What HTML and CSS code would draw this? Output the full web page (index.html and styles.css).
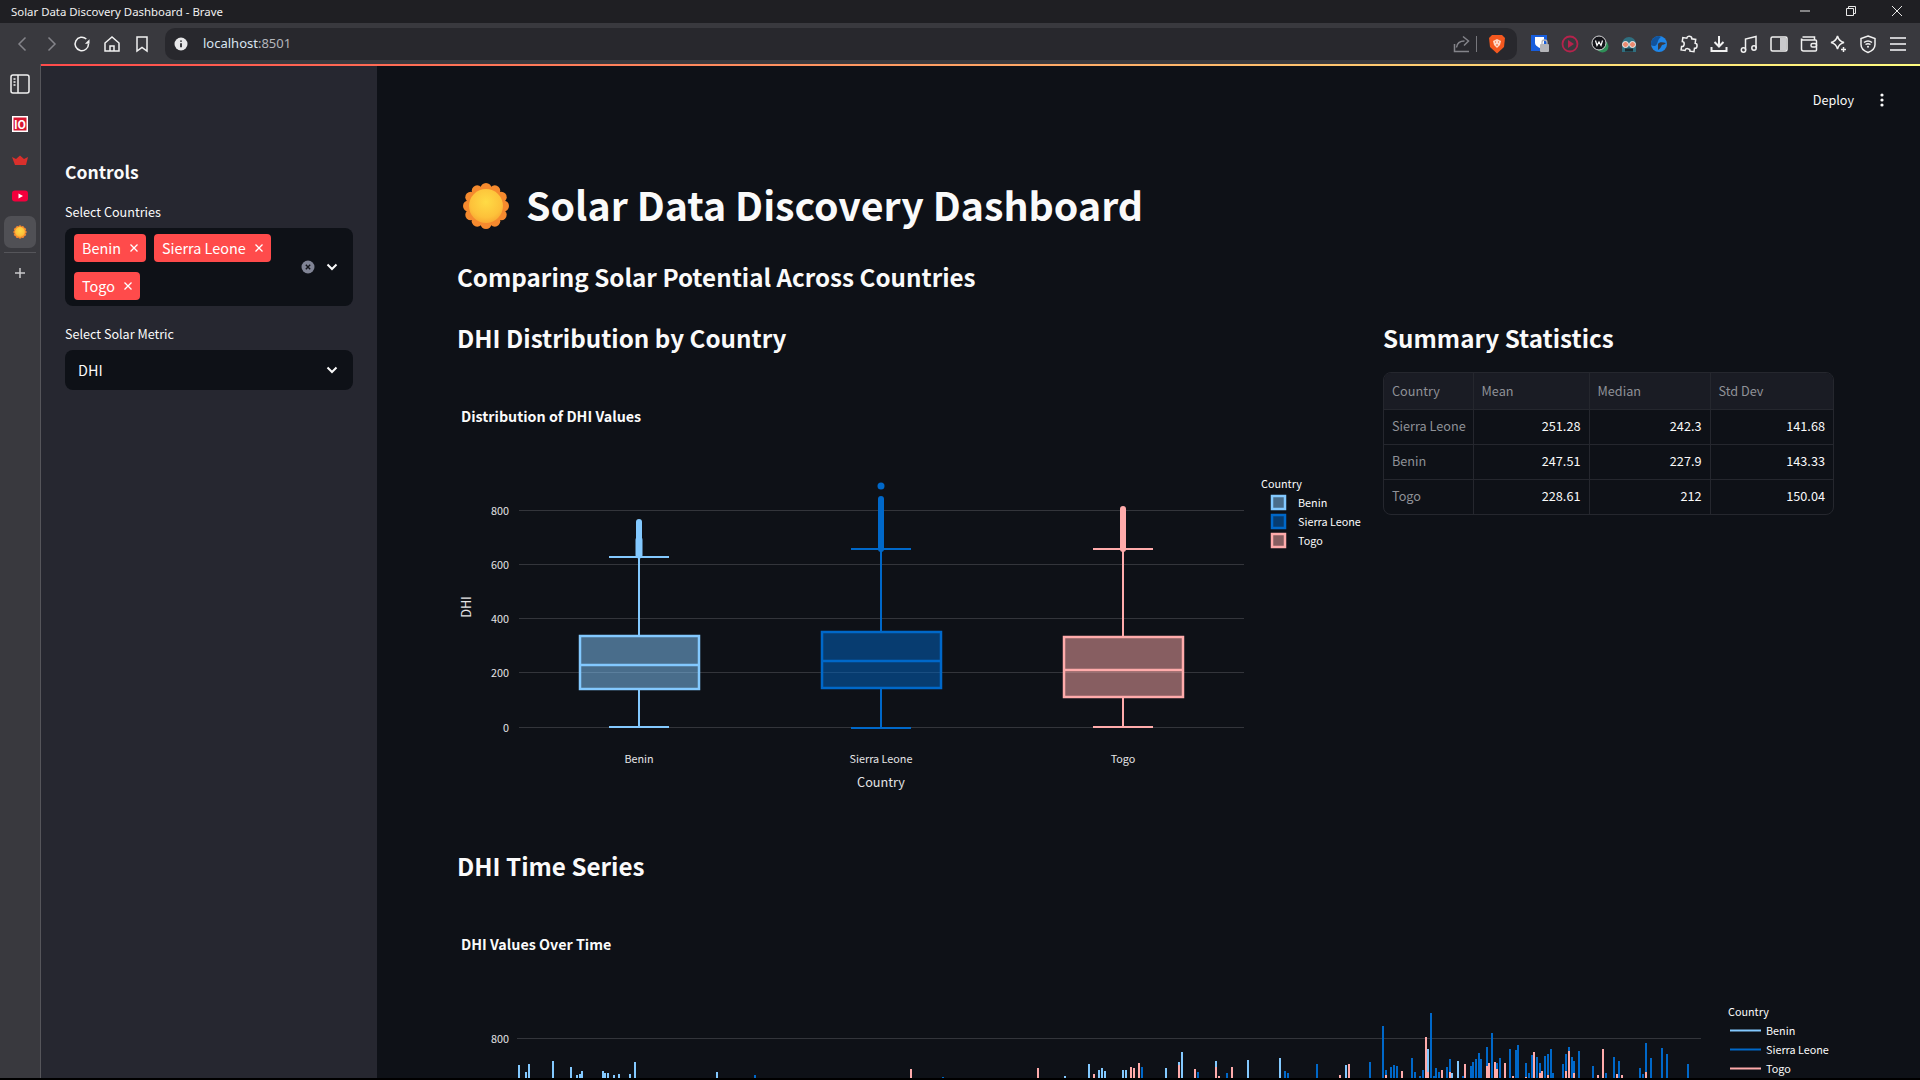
FILE: index.html
```html
<!DOCTYPE html>
<html lang="en">
<head>
    <meta charset="UTF-8">
    <title>Solar Data Discovery Dashboard - Brave</title>
    <link rel="stylesheet" href="styles.css">
</head>
<body>
    <svg class="defs" width="0" height="0">
        <defs>
            <radialGradient id="sunCore" cx="50%" cy="38%" r="65%">
                <stop offset="0%" stop-color="#ffdb45"/>
                <stop offset="70%" stop-color="#fdc13a"/>
                <stop offset="100%" stop-color="#f8a531"/>
            </radialGradient>
            <symbol id="sun" viewBox="0 0 48 48">
                <g fill="#f58a2e">
                    <circle cx="24" cy="6.5" r="5.5"/><circle cx="32.8" cy="8.8" r="5.5"/>
                    <circle cx="39.2" cy="15.2" r="5.5"/><circle cx="41.5" cy="24" r="5.5"/>
                    <circle cx="39.2" cy="32.8" r="5.5"/><circle cx="32.8" cy="39.2" r="5.5"/>
                    <circle cx="24" cy="41.5" r="5.5"/><circle cx="15.2" cy="39.2" r="5.5"/>
                    <circle cx="8.8" cy="32.8" r="5.5"/><circle cx="6.5" cy="24" r="5.5"/>
                    <circle cx="8.8" cy="15.2" r="5.5"/><circle cx="15.2" cy="8.8" r="5.5"/>
                </g>
                <circle cx="24" cy="24" r="17" fill="url(#sunCore)"/>
            </symbol>
        </defs>
    </svg>

    <div class="window">
        <div class="titlebar">
            <span class="window-title">Solar Data Discovery Dashboard - Brave</span>
            <div class="window-controls">
                <svg width="12" height="12" viewBox="0 0 12 12"><path d="M1 6h10" class="win-icon"/></svg>
                <svg width="12" height="12" viewBox="0 0 12 12"><path d="M1.5 3.5h7v7h-7zM3.5 3.5v-2h7v7h-2" class="win-icon"/></svg>
                <svg width="12" height="12" viewBox="0 0 12 12"><path d="M1 1l10 10M11 1L1 11" class="win-icon"/></svg>
            </div>
        </div>

        <div class="toolbar">
            <div class="nav-buttons">
                <span class="tool-btn"><svg width="20" height="20" viewBox="0 0 20 20"><path d="M13.5 3.500L7 10l6.500 6.500" class="line-dim"/></svg></span>
                <span class="tool-btn"><svg width="20" height="20" viewBox="0 0 20 20"><path d="M6.500 3.500L13 10l-6.500 6.500" class="line-dim"/></svg></span>
                <span class="tool-btn"><svg width="20" height="20" viewBox="0 0 20 20"><path d="M16.500 10a6.700 6.700 0 1 1-2.200-5" class="line"/><path d="M17.500 5.200v4.600h-4.600z" fill="#f1f1f1"/></svg></span>
                <span class="tool-btn"><svg width="20" height="20" viewBox="0 0 20 20"><path d="M3 9l7-6 7 6v8H3zM8 17v-5h4v5" class="line"/></svg></span>
                <span class="tool-btn"><svg width="20" height="20" viewBox="0 0 20 20"><path d="M5 3h10v14l-5-3.500L5 17z" class="line"/></svg></span>
            </div>
            <div class="urlbar">
                <svg width="14" height="14" viewBox="0 0 14 14"><circle cx="7" cy="7" r="6.500" fill="#e8e8ea"/><path d="M7 6.200v4M7 3.400v1.400" stroke="#2a2a2f" stroke-width="1.800"/></svg>
                <span class="url">localhost<span class="url-port">:8501</span></span>
                <svg class="url-share" width="18" height="18" viewBox="0 0 18 18"><path d="M1.500 9v7.500h14.500M3.500 12.500c.5-4 3.500-6.500 8-6.500M10 1.500L15.500 6 11 10.500" class="line-dim"/></svg>
                <span class="url-divider"></span>
                <svg width="18" height="20" viewBox="0 0 18 20"><path d="M4 1h10l3 3-1 9-7 6.500L2 13 1 4z" fill="#f4581f"/><path d="M5 7l4-2 4 2-1 4-3 3-3-3z" fill="#ffd9c8"/><path d="M7 8h1M10 8h1M9 10v2" stroke="#f4581f" stroke-width="1"/></svg>
            </div>
            <div class="extensions">
                <span class="tool-btn"><svg width="18" height="18" viewBox="0 0 18 18"><rect x="0" y="0" width="16" height="16" fill="#175ddc"/><path d="M4 2h9v6c0 2-2 3.500-4.500 5C6 11.500 4 10 4 8z" fill="#fff"/><rect x="9" y="9" width="9" height="8" rx="1" fill="#b4b5b9"/><path d="M11 9V7.500a2.500 2.500 0 0 1 5 0V9" fill="none" stroke="#b4b5b9" stroke-width="1.300"/></svg></span>
                <span class="tool-btn"><svg width="18" height="18" viewBox="0 0 18 18"><circle cx="9" cy="9" r="7.500" fill="none" stroke="#b5234c" stroke-width="1.800"/><path d="M7 5l6 4-6 4z" fill="#b5234c"/></svg></span>
                <span class="tool-btn"><svg width="18" height="18" viewBox="0 0 18 18"><circle cx="11.500" cy="11.500" r="6" fill="#2f8f57"/><circle cx="8" cy="8" r="7" fill="#15151a" stroke="#d6d6d8" stroke-width="1"/><path d="M4.500 5.500l1.500 5 2-3.500 2 3.500 1.500-5" fill="none" stroke="#fff" stroke-width="1.200"/></svg></span>
                <span class="tool-btn"><svg width="18" height="18" viewBox="0 0 18 18"><path d="M2 9a7 7 0 0 1 14 0v8H2z" fill="#2f6f80"/><circle cx="5.500" cy="9.500" r="3" fill="#eb8a70" stroke="#eee" stroke-width="1"/><circle cx="12.500" cy="9.500" r="3" fill="#eb8a70" stroke="#eee" stroke-width="1"/><rect x="5" y="13.500" width="8" height="3" fill="#1c2a2e"/></svg></span>
                <span class="tool-btn"><svg width="18" height="18" viewBox="0 0 18 18"><circle cx="9" cy="9" r="8" fill="#1f86e8"/><path d="M1 10c3 2 5 1 6-1s1-5 4-7l-2-1C5 1 1 4 1 9z" fill="#11539c"/><path d="M8 9c1-2 4-2 8-1-1 1-3 2-4 2-1 2-2 4-4 5z" fill="#3a3a40"/></svg></span>
                <span class="tool-btn"><svg width="20" height="20" viewBox="0 0 20 20"><path d="M7 4.500c0-3 5-3 5 0h4v4c3 0 3 5 0 5v3.500h-4c0-3-5-3-5 0H3v-3.500c3 0 3-5 0-5v-4z" class="line" transform="rotate(8 10 10)"/></svg></span>
                <span class="tool-btn"><svg width="20" height="20" viewBox="0 0 20 20"><path d="M10 2v10M5.500 8L10 12.500 14.500 8" class="line-bold"/><path d="M2.500 13v4h15v-4" class="line-bold"/></svg></span>
                <span class="tool-btn"><svg width="20" height="20" viewBox="0 0 20 20"><path d="M6.500 16V5L17 2.500V14" class="line"/><circle cx="4.500" cy="16" r="2.200" class="line"/><circle cx="15" cy="14" r="2.200" class="line"/></svg></span>
                <span class="tool-btn"><svg width="20" height="20" viewBox="0 0 20 20"><rect x="2" y="3" width="16" height="14" rx="1.500" class="line"/><rect x="11" y="4" width="6" height="12" fill="#c9c9cc"/></svg></span>
                <span class="tool-btn"><svg width="20" height="20" viewBox="0 0 20 20"><path d="M3.500 3h12v3M2.500 5v10a2 2 0 0 0 2 2h12a1 1 0 0 0 1-1V7a1 1 0 0 0-1-1H4a1.500 1.500 0 0 1-1.500-1.500z" class="line"/><rect x="12" y="9.500" width="5.500" height="3.500" rx="1.500" class="line"/></svg></span>
                <span class="tool-btn"><svg width="20" height="20" viewBox="0 0 20 20"><path d="M9.500 2c1 4 2.500 5.500 6.500 6.500-4 1-5.500 2.500-6.500 6.500-1-4-2.500-5.500-6.500-6.500 4-1 5.500-2.500 6.500-6.500z" class="line"/><path d="M15.500 13v5M13 15.500h5" class="line"/></svg></span>
                <span class="tool-btn"><svg width="20" height="20" viewBox="0 0 20 20"><path d="M10 2l7 2.500v6c0 4-3 6.500-7 8-4-1.500-7-4-7-8v-6z" class="line"/><path d="M6 8.500c2.500-2 5.500-2 8 0M7.500 10.500c1.500-1 3.500-1 5 0" class="line"/><circle cx="10" cy="12.800" r="1" fill="#f1f1f1"/></svg></span>
                <span class="tool-btn"><svg width="20" height="20" viewBox="0 0 20 20"><path d="M2 4h16M2 10h16M2 16h16" class="line-dull"/></svg></span>
            </div>
        </div>

        <div class="browser-body">
            <div class="brave-rail">
                <svg class="rail-panel" width="20" height="20" viewBox="0 0 20 20"><rect x="1" y="1" width="18" height="18" rx="2" class="line"/><path d="M8 1v18" class="line"/><path d="M3.500 5h2M3.500 8h2M3.500 11h2" class="line"/></svg>
                <svg class="rail-site" width="16" height="16" viewBox="0 0 16 16"><rect width="16" height="16" fill="#fff"/><rect x="1.500" y="1.500" width="13" height="13" fill="#d8162f"/><text x="8" y="12.500" class="rail-io">IO</text></svg>
                <svg class="rail-crown" width="16" height="10" viewBox="0 0 16 10"><path d="M0 2l4 2 4-3.500L12 4l4-2-2 8H3z" fill="#d9302c"/></svg>
                <svg class="rail-yt" width="16" height="12" viewBox="0 0 16 12"><rect width="16" height="11" y=".5" rx="3" fill="#f2003c"/><path d="M6.500 3.500L11 6l-4.500 2.500z" fill="#fff"/></svg>
                <div class="rail-active"><svg width="14" height="14"><use href="#sun"/></svg></div>
                <div class="rail-divider"></div>
                <svg class="rail-add" width="12" height="12" viewBox="0 0 12 12"><path d="M6 1v10M1 6h10" stroke="#c9c9cc" stroke-width="1.500"/></svg>
            </div>

            <div class="app">
                <div class="decoration"></div>
                <div class="app-body">
                    <aside class="sidebar">
                        <h3 class="sidebar-title">Controls</h3>
                        <label class="field-label">Select Countries</label>
                        <div class="multiselect">
                            <div class="tags">
                                <span class="tag">Benin<svg width="8" height="8" viewBox="0 0 8 8"><path d="M.5.5l7 7M7.500.5l-7 7" class="tag-x"/></svg></span>
                                <span class="tag">Sierra Leone<svg width="8" height="8" viewBox="0 0 8 8"><path d="M.5.5l7 7M7.500.5l-7 7" class="tag-x"/></svg></span>
                                <span class="tag">Togo<svg width="8" height="8" viewBox="0 0 8 8"><path d="M.5.5l7 7M7.500.5l-7 7" class="tag-x"/></svg></span>
                            </div>
                            <svg class="clear-icon" width="14" height="14" viewBox="0 0 14 14"><circle cx="7" cy="7" r="6.500" fill="#808495"/><path d="M4.800 4.800l4.400 4.400M9.200 4.800l-4.400 4.400" stroke="#14161c" stroke-width="1.400"/></svg>
                            <svg class="chevron" width="12" height="8" viewBox="0 0 12 8"><path d="M1.500 1.500L6 6l4.500-4.500" class="chevron-line"/></svg>
                        </div>
                        <label class="field-label second">Select Solar Metric</label>
                        <div class="select">
                            <span class="select-value">DHI</span>
                            <svg class="chevron" width="12" height="8" viewBox="0 0 12 8"><path d="M1.500 1.500L6 6l4.500-4.500" class="chevron-line"/></svg>
                        </div>
                    </aside>

                    <main class="main">
                        <div class="app-header">
                            <span class="deploy">Deploy</span>
                            <svg width="4" height="14" viewBox="0 0 4 14"><circle cx="2" cy="2" r="1.600" fill="#fafafa"/><circle cx="2" cy="7" r="1.600" fill="#fafafa"/><circle cx="2" cy="12" r="1.600" fill="#fafafa"/></svg>
                        </div>

                        <h1 class="page-title"><svg class="title-sun" width="48" height="48"><use href="#sun"/></svg>Solar Data Discovery Dashboard</h1>
                        <h2 class="heading subtitle">Comparing Solar Potential Across Countries</h2>

                        <div class="columns">
                            <section class="col-chart">
                                <h2 class="heading">DHI Distribution by Country</h2>
                                <svg class="chart chart-box" width="910" height="471" viewBox="457 359 910 471">
                                    <text x="461" y="422" class="chart-title">Distribution of DHI Values</text>

                                    <path d="M519 510.500H1244M519 564.500H1244M519 618.500H1244M519 672.500H1244M519 727.500H1244" class="grid"/>
                                    <text x="509" y="515" class="tick">800</text>
                                    <text x="509" y="569" class="tick">600</text>
                                    <text x="509" y="623" class="tick">400</text>
                                    <text x="509" y="677" class="tick">200</text>
                                    <text x="509" y="732" class="tick">0</text>

                                    <g class="box benin">
                                        <path d="M639 522V545" class="outliers"/>
                                        <path d="M639 540V555" class="outliers wide"/>
                                        <path d="M639 557V636M639 689V727M609 557H669M609 727H669"/>
                                        <rect x="580" y="636" width="119" height="53"/>
                                        <path d="M580 665H699" class="median"/>
                                    </g>
                                    <g class="box sierra">
                                        <circle cx="881" cy="486" r="3.500"/>
                                        <path d="M881 499V549" class="outliers"/>
                                        <path d="M881 549V632M881 688V728M851 549H911M851 728H911"/>
                                        <rect x="822" y="632" width="119" height="56"/>
                                        <path d="M822 661H941" class="median"/>
                                    </g>
                                    <g class="box togo">
                                        <path d="M1123 509V549" class="outliers"/>
                                        <path d="M1123 549V637M1123 697V727M1093 549H1153M1093 727H1153"/>
                                        <rect x="1064" y="637" width="119" height="60"/>
                                        <path d="M1064 670H1183" class="median"/>
                                    </g>

                                    <text x="639" y="763" class="tick middle">Benin</text>
                                    <text x="881" y="763" class="tick middle">Sierra Leone</text>
                                    <text x="1123" y="763" class="tick middle">Togo</text>
                                    <text x="881" y="787" class="axis-title middle">Country</text>
                                    <text x="471" y="607" transform="rotate(-90 471 607)" class="axis-title middle">DHI</text>

                                    <text x="1261" y="488" class="legend-title">Country</text>
                                    <g class="box benin"><rect x="1272" y="496" width="13" height="13"/></g>
                                    <g class="box sierra"><rect x="1272" y="515" width="13" height="13"/></g>
                                    <g class="box togo"><rect x="1272" y="534" width="13" height="13"/></g>
                                    <text x="1298" y="507" class="legend-item">Benin</text>
                                    <text x="1298" y="526" class="legend-item">Sierra Leone</text>
                                    <text x="1298" y="545" class="legend-item">Togo</text>
                                </svg>
                            </section>

                            <section class="col-stats">
                                <h2 class="heading">Summary Statistics</h2>
                                <div class="table-wrap">
                                    <table class="stats">
                                        <colgroup>
                                            <col class="col-country"><col class="col-mean"><col class="col-median"><col class="col-std">
                                        </colgroup>
                                        <thead>
                                            <tr><th>Country</th><th>Mean</th><th>Median</th><th>Std Dev</th></tr>
                                        </thead>
                                        <tbody>
                                            <tr><td>Sierra Leone</td><td>251.28</td><td>242.3</td><td>141.68</td></tr>
                                            <tr><td>Benin</td><td>247.51</td><td>227.9</td><td>143.33</td></tr>
                                            <tr><td>Togo</td><td>228.61</td><td>212</td><td>150.04</td></tr>
                                        </tbody>
                                    </table>
                                </div>
                            </section>
                        </div>

                        <h2 class="heading series-heading">DHI Time Series</h2>
                        <svg class="chart chart-series" width="1383" height="192" viewBox="457 886 1383 192">
                            <text x="461" y="950" class="chart-title">DHI Values Over Time</text>
                            <path d="M517 1038.500H1701" class="grid"/>
                            <text x="509" y="1043" class="tick">800</text>

                            <!-- one path per country, drawn in legend order -->
                            <path class="bars bars-benin" d="M519 1078V1065M526 1078V1072M529 1078V1064M553 1078V1061M571 1078V1067M577 1078V1075M580 1078V1074M582 1078V1071M603 1078V1071M605 1078V1073M608 1078V1073M614 1078V1075M619 1078V1074M630 1078V1074M635 1078V1062M717 1078V1072M1065 1078V1076M1089 1078V1064M1099 1078V1070M1102 1078V1068M1105 1078V1071M1123 1078V1070M1126 1078V1070M1166 1078V1068M1179 1078V1062M1182 1078V1052M1216 1078V1061M1248 1078V1060M1280 1078V1058M1346 1078V1065M1428 1078V1049M1452 1078V1073M1458 1078V1061"/>
                            <path class="bars bars-sierra" d="M755 1078V1075M943 1078V1077M1142 1078V1067M1198 1078V1072M1227 1078V1073M1285 1078V1071M1288 1078V1073M1317 1078V1064M1370 1078V1062M1383 1078V1026M1386 1078V1070M1391 1078V1067M1394 1078V1065M1397 1078V1066M1412 1078V1058M1415 1078V1072M1420 1078V1076M1423 1078V1070M1431 1078V1013M1434 1078V1076M1436 1078V1068M1439 1078V1072M1447 1078V1067M1450 1078V1059M1463 1078V1076M1471 1078V1066M1473 1078V1062M1476 1078V1059M1479 1078V1053M1481 1078V1059M1487 1078V1047M1492 1078V1033M1497 1078V1063M1500 1078V1058M1510 1078V1049M1516 1078V1050M1518 1078V1045M1526 1078V1063M1529 1078V1073M1532 1078V1055M1537 1078V1057M1540 1078V1063M1545 1078V1056M1548 1078V1054M1551 1078V1049M1553 1078V1073M1563 1078V1064M1566 1078V1054M1569 1078V1047M1572 1078V1057M1574 1078V1061M1579 1078V1051M1593 1078V1066M1606 1078V1073M1614 1078V1057M1619 1078V1061M1640 1078V1068M1643 1078V1074M1646 1078V1043M1651 1078V1058M1662 1078V1048M1667 1078V1054M1688 1078V1064"/>
                            <path class="bars bars-togo" d="M911 1078V1069M1038 1078V1068M1094 1078V1074M1131 1078V1067M1134 1078V1068M1139 1078V1063M1179 1078V1065M1195 1078V1069M1216 1078V1067M1219 1078V1076M1232 1078V1067M1340 1078V1075M1349 1078V1064M1386 1078V1075M1402 1078V1071M1426 1078V1037M1428 1078V1072M1442 1078V1070M1450 1078V1072M1465 1078V1064M1487 1078V1066M1489 1078V1063M1495 1078V1062M1497 1078V1069M1505 1078V1063M1513 1078V1076M1526 1078V1077M1534 1078V1052M1540 1078V1073M1542 1078V1071M1548 1078V1075M1566 1078V1071M1569 1078V1051M1574 1078V1073M1598 1078V1075M1603 1078V1049M1617 1078V1074M1622 1078V1075M1646 1078V1072"/>

                            <text x="1728" y="1016" class="legend-title">Country</text>
                            <path d="M1730 1030.500H1761" class="legend-line bars-benin"/>
                            <path d="M1730 1049.500H1761" class="legend-line bars-sierra"/>
                            <path d="M1730 1068.500H1761" class="legend-line bars-togo"/>
                            <text x="1766" y="1035" class="legend-item">Benin</text>
                            <text x="1766" y="1054" class="legend-item">Sierra Leone</text>
                            <text x="1766" y="1073" class="legend-item">Togo</text>
                        </svg>
                    </main>
                </div>
            </div>
        </div>
    </div>
</body>
</html>
```

FILE: styles.css
```css
* {
    box-sizing: border-box;
}
html, body {
    margin: 0;
    height: 100%;
    overflow: hidden;
    background-color: #000;
}
body {
    font-family: "Noto Sans CJK SC", "Noto Sans", sans-serif;
    color: #fafafa;
}
.defs {
    position: absolute;
}
.window {
    height: 1078px;
    display: flex;
    flex-direction: column;
    overflow: hidden;
}

/* browser chrome */
.titlebar {
    height: 23px;
    background-color: #1f1f23;
    display: flex;
    align-items: center;
    justify-content: space-between;
    padding: 0 17px 0 11px;
    flex: none;
}
.window-title {
    font-family: "Noto Sans", sans-serif;
    font-size: 11.4px;
    line-height: 16px;
    color: #f1f1f1;
}
.window-controls {
    display: flex;
    gap: 34px;
    margin-bottom: 2px;
}
.win-icon {
    fill: none;
    stroke: #e8e8e8;
    stroke-width: 1;
}
.toolbar {
    height: 41px;
    background-color: #39393e;
    display: flex;
    align-items: center;
    padding: 0 7px;
    flex: none;
}
.nav-buttons {
    display: flex;
    flex: none;
}
.tool-btn {
    width: 30px;
    height: 30px;
    display: flex;
    align-items: center;
    justify-content: center;
    flex: none;
}
.extensions {
    display: flex;
    margin-left: 8px;
    flex: none;
}
.extensions .tool-btn {
    width: 29.85px;
}
.line, .line-dim, .line-bold, .line-dull {
    fill: none;
    stroke: #f1f1f1;
    stroke-width: 1.5;
}
.line-dim {
    stroke: #84848a;
}
.line-bold {
    stroke-width: 2;
}
.line-dull {
    stroke: #c9c9cc;
    stroke-width: 2;
}
.urlbar {
    flex: 1;
    height: 32px;
    margin-left: 8px;
    background-color: #28282d;
    border-radius: 10px;
    display: flex;
    align-items: center;
    padding: 0 11px 0 9px;
}
.url {
    font-family: "Noto Sans", sans-serif;
    font-size: 13px;
    line-height: 18px;
    margin-left: 15px;
    padding-bottom: 2px;
    color: #d8e4f0;
}
.url-port {
    color: #b4b6bb;
}
.url-share {
    margin-left: auto;
}
.url-divider {
    width: 1px;
    height: 16px;
    margin: 0 11px 0 5px;
    background-color: #77777c;
}

/* brave side rail */
.browser-body {
    flex: 1;
    display: flex;
    min-height: 0;
}
.brave-rail {
    width: 41px;
    flex: none;
    background-color: #39393e;
    border-right: 1px solid #55555a;
    display: flex;
    flex-direction: column;
    align-items: center;
    padding-right: 1px;
}
.rail-panel {
    margin-top: 10px;
}
.rail-site {
    margin-top: 22px;
}
.rail-io {
    font-size: 11px;
    font-weight: 700;
    fill: #fff;
    text-anchor: middle;
}
.rail-crown {
    margin-top: 23px;
}
.rail-yt {
    margin-top: 25px;
}
.rail-active {
    width: 32px;
    height: 32px;
    margin-top: 14px;
    background-color: #505055;
    border-radius: 7px;
    display: flex;
    align-items: center;
    justify-content: center;
}
.rail-divider {
    width: 32px;
    height: 1px;
    margin-top: 4px;
    background-color: #55555a;
}
.rail-add {
    margin-top: 14px;
}

/* streamlit app */
.app {
    flex: 1;
    min-width: 0;
    display: flex;
    flex-direction: column;
    background-color: #0e1117;
}
.decoration {
    height: 2px;
    flex: none;
    background-image: linear-gradient(90deg, #ff4b4b, #fffd80);
}
.app-body {
    flex: 1;
    display: flex;
    min-height: 0;
}
.sidebar {
    width: 336px;
    flex: none;
    background-color: #262730;
    padding: 90px 24px 0;
}
.sidebar-title {
    margin: 0;
    font-size: 17.5px;
    font-weight: 600;
    line-height: 32px;
}
.field-label {
    display: block;
    margin-top: 14px;
    font-size: 12.6px;
    line-height: 20px;
}
.field-label.second {
    margin-top: 18px;
}
.multiselect, .select {
    margin-top: 6px;
    background-color: #0e1117;
    border-radius: 8px;
    display: flex;
    align-items: center;
}
.multiselect {
    height: 78px;
    padding: 0 15px 0 9px;
}
.tags {
    width: 225px;
    display: flex;
    flex-wrap: wrap;
    gap: 10px 8px;
}
.tag {
    height: 28px;
    background-color: #ff4b4b;
    border-radius: 4px;
    display: flex;
    align-items: center;
    gap: 9px;
    padding: 0 8px 1px;
    font-size: 14.4px;
    line-height: 26px;
    color: #fff;
}
.tag-x {
    stroke: #fff;
    stroke-width: 1.3;
}
.clear-icon {
    margin-left: auto;
    margin-right: 11px;
}
.chevron-line {
    fill: none;
    stroke: #fafafa;
    stroke-width: 2;
}
.select {
    height: 40px;
    justify-content: space-between;
    padding: 0 15px 0 13px;
    font-size: 14.4px;
}
.select-value {
    padding-bottom: 2px;
}
.main {
    flex: 1;
    min-width: 0;
    padding-left: 80px;
    overflow: hidden;
}
.app-header {
    height: 68px;
    display: flex;
    align-items: center;
    justify-content: flex-end;
    gap: 26px;
    padding-right: 36px;
}
.deploy {
    font-size: 12.6px;
    line-height: 20px;
}
.page-title {
    margin: 40px 0 0;
    display: flex;
    align-items: center;
    gap: 16px;
    padding-left: 5px;
    font-size: 39.3px;
    font-weight: 700;
    line-height: 60px;
}
.title-sun {
    margin-top: 4px;
}
.heading {
    margin: 0;
    font-size: 24.2px;
    font-weight: 600;
    line-height: 40px;
}
.subtitle {
    margin-top: 23px;
}
.columns {
    display: flex;
    gap: 16px;
    margin-top: 21px;
}
.columns .heading {
    margin-bottom: 1px;
}
.col-chart {
    width: 910px;
    flex: none;
}
.col-stats {
    width: 451px;
    flex: none;
}
.series-heading {
    margin-top: 16px;
}

/* plotly charts */
.chart {
    display: block;
}
.chart-title {
    font-size: 14.3px;
    font-weight: 700;
    fill: #fafafa;
}
.tick {
    font-size: 10.8px;
    fill: #e4e4e6;
    text-anchor: end;
}
.tick.middle, .axis-title.middle {
    text-anchor: middle;
}
.axis-title {
    font-size: 12.7px;
    fill: #e4e4e6;
}
.legend-title, .legend-item {
    font-size: 10.8px;
    fill: #fafafa;
}
.grid {
    stroke: #33353b;
    stroke-width: 1;
    fill: none;
}
.box path, .box rect {
    fill: none;
    stroke-width: 2;
}
.box rect, .box .median {
    stroke-width: 2.5;
}
.box .outliers {
    stroke-width: 6;
    stroke-linecap: round;
}
.box .outliers.wide {
    stroke-width: 7;
}
.box.benin path, .box.benin rect {
    stroke: #83c9ff;
}
.box.sierra path, .box.sierra rect {
    stroke: #0068c9;
}
.box.togo path, .box.togo rect {
    stroke: #ffabab;
}
.box.benin rect {
    fill: rgba(131, 201, 255, 0.5);
}
.box.sierra rect {
    fill: rgba(0, 104, 201, 0.5);
}
.box.togo rect {
    fill: rgba(255, 171, 171, 0.5);
}
.box.sierra circle {
    fill: #0068c9;
}
.bars {
    fill: none;
    stroke-width: 2;
}
.legend-line {
    fill: none;
    stroke-width: 2;
}
.bars-benin {
    stroke: #83c9ff;
}
.bars-sierra {
    stroke: #0068c9;
}
.bars-togo {
    stroke: #ffabab;
}

/* summary table */
.table-wrap {
    margin-top: 14px;
    border: 1px solid #25272e;
    border-radius: 8px;
    overflow: hidden;
}
.stats {
    width: 100%;
    border-collapse: collapse;
    table-layout: fixed;
    font-size: 12.7px;
}
.col-country {
    width: 89px;
}
.col-mean {
    width: 116px;
}
.col-median {
    width: 121px;
}
.stats th, .stats td {
    height: 35px;
    padding: 0 8px;
    border-right: 1px solid #25272e;
    border-bottom: 1px solid #25272e;
    font-weight: 400;
    line-height: 20px;
    white-space: nowrap;
}
.stats th {
    height: 36px;
    background-color: #1a1c24;
    color: #8f9197;
    text-align: left;
}
.stats td {
    padding-bottom: 2px;
    text-align: right;
}
.stats td:first-child {
    color: #8f9197;
    text-align: left;
}
.stats th:last-child, .stats td:last-child {
    border-right: none;
}
.stats tr:last-child td {
    border-bottom: none;
}
```
